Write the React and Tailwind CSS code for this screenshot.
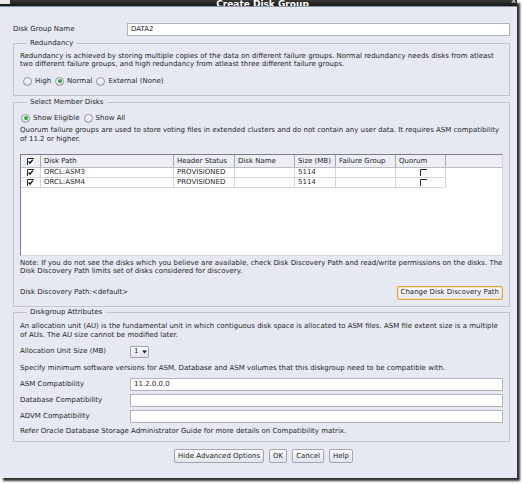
import React from "react";

function Radio({ checked }) {
  return (
    <span className="w-[9px] h-[9px] rounded-full border border-[#8d919a] bg-linear-to-b from-white to-[#d9dce3] flex items-center justify-center shrink-0">
      {checked && <span className="w-[4px] h-[4px] rounded-full bg-[#35a83c]" />}
    </span>
  );
}

function Check({ checked }) {
  return (
    <svg width="7" height="7" viewBox="0 0 7 7" className="shrink-0">
      <rect x="0" y="0" width="7" height="7" fill="#fff" />
      <path d="M0.5 7V0.5H7" stroke="#2a2a2a" strokeWidth="1" fill="none" />
      {checked && (
        <path d="M1.6 3.4L3 5.1L5.9 1.6" stroke="#111" strokeWidth="1.4" fill="none" />
      )}
    </svg>
  );
}

function Btn({ children, focus }) {
  return (
    <div
      className={
        "h-[14px] px-[3px] flex items-center rounded-[2px] bg-linear-to-b from-[#fbfbfd] to-[#e2e5eb] whitespace-nowrap " +
        (focus
          ? "border border-[#d6a445] shadow-[inset_0_0_0_1px_#f6e2b0]"
          : "border border-[#a2a6ae]")
      }
    >
      {children}
    </div>
  );
}

function Input({ value }) {
  return (
    <div className="flex-1 h-[13px] border border-[#aeb2ba] bg-white flex items-center pl-[3px]">
      {value}
    </div>
  );
}

const cols = [
  { w: 20, key: "chk" },
  { w: 133, label: "Disk Path" },
  { w: 61, label: "Header Status" },
  { w: 60, label: "Disk Name" },
  { w: 41, label: "Size (MB)" },
  { w: 60, label: "Failure Group" },
  { w: 50, label: "Quorum" },
];

const rows = [
  ["ORCL:ASM3", "PROVISIONED", "", "5114", ""],
  ["ORCL:ASM4", "PROVISIONED", "", "5114", ""],
];

export default function App() {
  return (
    <div className="w-[523px] h-[484px] bg-white overflow-hidden font-['DejaVu_Sans',sans-serif] text-[7px] text-[#1f1f1f]">
      <div className="w-[517px] h-[478px] flex flex-col shadow-[3px_3px_2px_rgba(0,0,0,0.8)]">
        {/* title bar */}
        <div className="h-[7px] bg-linear-to-b from-[#3a3a3a] to-[#161616] border-b border-[#8892a8] grid grid-cols-[12px_1fr_12px] items-end overflow-hidden">
          <div className="w-[10px] h-[4px] bg-[#e8e8e8] self-start" />
          <div className="flex justify-center items-end h-full">
            <span className="text-white font-bold text-[9px] leading-[9px] mb-[1px] pl-[8px]">Create Disk Group</span>
          </div>
          <div className="text-white text-[8px] leading-[8px] self-start -mt-[3px] text-right pr-[1px]">x</div>
        </div>

        {/* body */}
        <div className="flex-1 bg-[#e6e9f2] pl-[13px] pr-[7px]">
          {/* disk group name */}
          <div className="mt-[16px] h-[13px] flex items-center">
            <div className="w-[114px]">Disk Group Name</div>
            <Input value="DATA2" />
          </div>

          {/* Redundancy */}
          <fieldset className="mt-[3px] border border-[#c3c6cd] pl-[6px] pr-[6px] pb-[9px]">
            <legend className="ml-[7px] px-[3px] leading-[9px]">Redundancy</legend>
            <div className="mt-[4px] leading-[8px] whitespace-nowrap">
              Redundancy is achieved by storing multiple copies of the data on different failure groups. Normal redundancy needs disks from atleast
              <br />
              two different failure groups, and high redundancy from atleast three different failure groups.
            </div>
            <div className="mt-[8px] h-[10px] flex items-center pl-[3px]">
              <Radio />
              <span className="ml-[3px] mr-[4px]">High</span>
              <Radio checked />
              <span className="ml-[3px] mr-[4px]">Normal</span>
              <Radio />
              <span className="ml-[3px]">External (None)</span>
            </div>
          </fieldset>

          {/* Select Member Disks */}
          <fieldset className="mt-[2px] border border-[#c3c6cd] pl-[6px] pr-[6px] pb-[6px]">
            <legend className="ml-[7px] px-[3px] leading-[9px]">Select Member Disks</legend>
            <div className="mt-[6px] h-[10px] flex items-center pl-[1px]">
              <Radio checked />
              <span className="ml-[3px] mr-[4px]">Show Eligible</span>
              <Radio />
              <span className="ml-[3px]">Show All</span>
            </div>
            <div className="mt-[3px] leading-[8.5px] whitespace-nowrap">
              Quorum failure groups are used to store voting files in extended clusters and do not contain any user data. It requires ASM compatibility
              <br />
              of 11.2 or higher.
            </div>

            {/* table */}
            <div className="mt-[11px] h-[102px] bg-white border-l border-t border-[#7c7f86] border-r border-b border-r-[#d4d6db] border-b-[#d4d6db] flex flex-col">
              <div className="h-[13px] flex bg-[#eceef3] border-b border-[#b9bcc3]">
                {cols.map((c, i) => (
                  <div
                    key={i}
                    style={{ width: c.w }}
                    className={
                      "h-full border-r border-[#a8abb2] flex items-center " +
                      (c.key === "chk" ? "justify-center" : "pl-[3px]")
                    }
                  >
                    {c.key === "chk" ? <Check checked /> : c.label}
                  </div>
                ))}
              </div>
              {rows.map((r, ri) => (
                <div key={ri} className="h-[10px] flex">
                  <div className="w-[20px] h-full border-r border-b border-[#d6d8dc] flex items-center justify-center">
                    <Check checked />
                  </div>
                  {r.map((v, ci) => (
                    <div
                      key={ci}
                      style={{ width: cols[ci + 1].w }}
                      className="h-full border-r border-b border-[#d6d8dc] flex items-center pl-[3px]"
                    >
                      {v}
                    </div>
                  ))}
                  <div className="w-[50px] h-full border-r border-b border-[#d6d8dc] flex items-center justify-center pl-[6px]">
                    <Check />
                  </div>
                </div>
              ))}
            </div>

            <div className="mt-[2.5px] leading-[8px] whitespace-nowrap">
              Note: If you do not see the disks which you believe are available, check Disk Discovery Path and read/write permissions on the disks. The
              <br />
              Disk Discovery Path limits set of disks considered for discovery.
            </div>
            <div className="mt-[11px] h-[14px] flex items-center justify-between">
              <span>Disk Discovery Path:&lt;default&gt;</span>
              <Btn focus>Change Disk Discovery Path</Btn>
            </div>
          </fieldset>

          {/* Diskgroup Attributes */}
          <fieldset className="mt-[1px] border border-[#c3c6cd] pl-[6px] pr-[6px] pb-[5px]">
            <legend className="ml-[7px] px-[3px] leading-[9px]">Diskgroup Attributes</legend>
            <div className="mt-[5px] leading-[9px] whitespace-nowrap">
              An allocation unit (AU) is the fundamental unit in which contiguous disk space is allocated to ASM files. ASM file extent size is a multiple
              <br />
              of AUs. The AU size cannot be modified later.
            </div>
            <div className="mt-[6px] h-[12px] flex items-center">
              <div className="w-[110px]">Allocation Unit Size (MB)</div>
              <div className="w-[19px] h-[12px] border border-[#a2a6ae] rounded-[1px] bg-linear-to-b from-[#fbfbfd] to-[#e0e3e9] flex items-center pl-[3px]">
                <span>1</span>
                <svg width="5" height="4" viewBox="0 0 5 4" className="ml-[4px]">
                  <path d="M0 0.5H5L2.5 3.5Z" fill="#222" />
                </svg>
              </div>
            </div>
            <div className="mt-[6.5px] leading-[9px] whitespace-nowrap">
              Specify minimum software versions for ASM, Database and ASM volumes that this diskgroup need to be compatible with.
            </div>
            <div className="mt-[5px] flex items-center">
              <div className="w-[110px]">ASM Compatibility</div>
              <Input value="11.2.0.0.0" />
            </div>
            <div className="mt-[3px] flex items-center">
              <div className="w-[110px]">Database Compatibility</div>
              <Input value="" />
            </div>
            <div className="mt-[3px] flex items-center">
              <div className="w-[110px]">ADVM Compatibility</div>
              <Input value="" />
            </div>
            <div className="mt-[4px] leading-[9px] whitespace-nowrap">
              Refer Oracle Database Storage Administrator Guide for more details on Compatibility matrix.
            </div>
          </fieldset>

          {/* buttons */}
          <div className="mt-[7px] flex justify-center gap-[5px] pl-[4px]">
            <Btn>Hide Advanced Options</Btn>
            <Btn>OK</Btn>
            <Btn>Cancel</Btn>
            <Btn>Help</Btn>
          </div>
        </div>
      </div>
    </div>
  );
}
